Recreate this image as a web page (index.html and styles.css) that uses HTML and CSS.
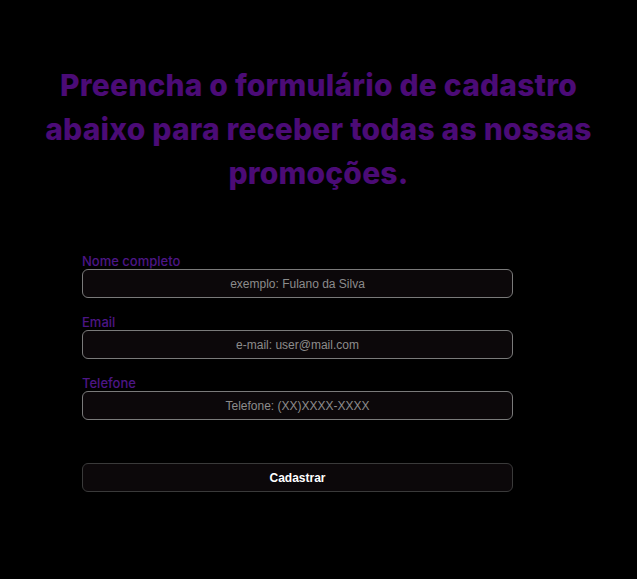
FILE: index.html
```html
<!DOCTYPE html>
<html lang="pt-BR">
<head>
    <meta charset="UTF-8">
    <meta name="viewport" content="width=device-width, initial-scale=1.0">
    <title>Cadastro</title>
    <link rel="stylesheet" href="styles.css">
</head>
<body>

    <h1 class="titulo">Preencha o formulário de cadastro abaixo para receber todas as nossas promoções.</h1>

    <form class="formulario">
        <div class="campo">
            <label for="nome">Nome completo</label>
            <input type="text" id="nome" placeholder="exemplo: Fulano da Silva">
        </div>
        <div class="campo">
            <label for="email">Email</label>
            <input type="email" id="email" placeholder="e-mail: user@mail.com">
        </div>
        <div class="campo">
            <label for="telefone">Telefone</label>
            <input type="tel" id="telefone" placeholder="Telefone: (XX)XXXX-XXXX">
        </div>
        <button type="submit" class="botao">Cadastrar</button>
    </form>

</body>
</html>
```

FILE: styles.css
```css
body {
    background-color: #000;
    margin: 8px;
    font-family: "Liberation Sans", Arial, sans-serif;
}
.titulo {
    font-family: Inter, "Noto Sans", sans-serif;
    font-weight: 800;
    font-size: 30px;
    letter-spacing: 0.2px;
    line-height: 44px;
    color: #4b0b76;
    text-align: center;
    max-width: 570px;
    margin: 55px auto 0;
}
.formulario {
    width: 431px;
    margin: 59px 0 0 74px;
    display: flex;
    flex-direction: column;
}
.campo {
    display: flex;
    flex-direction: column;
    margin-bottom: 17px;
}
.campo label {
    font-family: Inter, "Noto Sans", sans-serif;
    font-weight: 500;
    font-size: 13px;
    line-height: 15px;
    color: #4d1686;
}
.campo input, .botao {
    box-sizing: border-box;
    height: 29px;
    width: 100%;
    background-color: #0c080a;
    border: 1px solid #7a7a7a;
    border-radius: 6px;
    text-align: center;
    font-family: "Liberation Sans", Arial, sans-serif;
    font-size: 12px;
    color: #ccc;
}
.campo input::placeholder {
    color: #8c8c8c;
}
.botao {
    margin-top: 26px;
    border-color: #3a3a3a;
    color: #fff;
    font-weight: 700;
}
```
